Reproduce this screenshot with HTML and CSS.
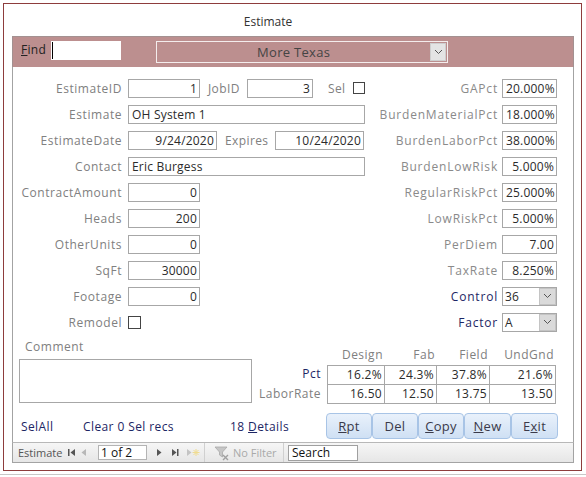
FILE: index.html
```html
<!DOCTYPE html>
<html>
<head>
<meta charset="utf-8">
<link rel="stylesheet" href="styles.css">
</head>
<body>
<div class="window">
  <div class="title">Estimate</div>
  <div class="form">
    <div class="header">
      <span class="find"><u>F</u>ind</span>
      <div class="find-input"><span class="caret"></span></div>
      <div class="combo">
        <span class="combo-text">More Texas</span>
        <span class="dd"><svg width="9" height="6" viewBox="0 0 9 6"><path d="M1 1 L4.5 4.5 L8 1" fill="none" stroke="#555" stroke-width="1"/></svg></span>
      </div>
    </div>
    <div class="detail">
      <div class="fields">
        <div class="col-left">
          <div class="row"><span class="lbl">EstimateID</span><span class="box num w72">1</span><span class="lbl2 job">JobID</span><span class="box num w66">3</span><span class="lbl2 sel">Sel</span><span class="chk"></span></div>
          <div class="row"><span class="lbl">Estimate</span><span class="box w237">OH System 1</span></div>
          <div class="row"><span class="lbl">EstimateDate</span><span class="box num w89">9/24/2020</span><span class="lbl2 exp">Expires</span><span class="box num w89">10/24/2020</span></div>
          <div class="row"><span class="lbl">Contact</span><span class="box w237">Eric Burgess</span></div>
          <div class="row"><span class="lbl">ContractAmount</span><span class="box num w72">0</span></div>
          <div class="row"><span class="lbl">Heads</span><span class="box num w72">200</span></div>
          <div class="row"><span class="lbl">OtherUnits</span><span class="box num w72">0</span></div>
          <div class="row"><span class="lbl">SqFt</span><span class="box num w72">30000</span></div>
          <div class="row"><span class="lbl">Footage</span><span class="box num w72">0</span></div>
          <div class="row"><span class="lbl">Remodel</span><span class="chk big"></span></div>
        </div>
        <div class="col-right">
          <div class="row"><span class="rlbl">GAPct</span><span class="box num w55">20.000%</span></div>
          <div class="row"><span class="rlbl">BurdenMaterialPct</span><span class="box num w55">18.000%</span></div>
          <div class="row"><span class="rlbl">BurdenLaborPct</span><span class="box num w55">38.000%</span></div>
          <div class="row"><span class="rlbl">BurdenLowRisk</span><span class="box num w55">5.000%</span></div>
          <div class="row"><span class="rlbl">RegularRiskPct</span><span class="box num w55">25.000%</span></div>
          <div class="row"><span class="rlbl">LowRiskPct</span><span class="box num w55">5.000%</span></div>
          <div class="row"><span class="rlbl">PerDiem</span><span class="box num w55">7.00</span></div>
          <div class="row"><span class="rlbl">TaxRate</span><span class="box num w55">8.250%</span></div>
          <div class="row"><span class="rlbl navy">Control</span><span class="box w55 cbo"><span class="cbo-val">36</span><span class="dd small"><svg width="9" height="6" viewBox="0 0 9 6"><path d="M1 1 L4.5 4.5 L8 1" fill="none" stroke="#555" stroke-width="1"/></svg></span></span></div>
          <div class="row"><span class="rlbl navy">Factor</span><span class="box w55 cbo"><span class="cbo-val">A</span><span class="dd small"><svg width="9" height="6" viewBox="0 0 9 6"><path d="M1 1 L4.5 4.5 L8 1" fill="none" stroke="#555" stroke-width="1"/></svg></span></span></div>
        </div>
      </div>
      <div class="lower">
        <div class="comment-col">
          <div class="comment-lbl">Comment</div>
          <div class="comment-box"></div>
        </div>
        <div class="grid">
          <div class="grow ghead"><span class="glbl"></span><span class="gc c1">Design</span><span class="gc c2">Fab</span><span class="gc c3">Field</span><span class="gc c4">UndGnd</span></div>
          <div class="grow gdata first-row"><span class="glbl navy">Pct</span><span class="gc c1">16.2%</span><span class="gc c2">24.3%</span><span class="gc c3">37.8%</span><span class="gc c4">21.6%</span></div>
          <div class="grow gdata"><span class="glbl">LaborRate</span><span class="gc c1">16.50</span><span class="gc c2">12.50</span><span class="gc c3">13.75</span><span class="gc c4">13.50</span></div>
        </div>
      </div>
      <div class="actions">
        <span class="link a1">SelAll</span>
        <span class="link a2">Clear 0 Sel recs</span>
        <span class="link a3">18 <u>D</u>etails</span>
        <div class="btns">
          <span class="btn b46"><u>R</u>pt</span>
          <span class="btn b46">Del</span>
          <span class="btn b46"><u>C</u>opy</span>
          <span class="btn b47"><u>N</u>ew</span>
          <span class="btn b47">E<u>x</u>it</span>
        </div>
      </div>
    </div>
    <div class="nav">
      <span class="nav-name">Estimate</span>
      <svg class="ic first" width="8" height="9" viewBox="0 0 8 9"><rect x="0" y="1" width="1.5" height="7" fill="#555"/><path d="M7 1 L2.5 4.5 L7 8 Z" fill="#555"/></svg>
      <svg class="ic prev" width="6" height="9" viewBox="0 0 6 9"><path d="M5 1 L0.5 4.5 L5 8 Z" fill="#b8b8b8"/></svg>
      <span class="nav-box">1 of 2</span>
      <svg class="ic next" width="6" height="9" viewBox="0 0 6 9"><path d="M1 1 L5.5 4.5 L1 8 Z" fill="#555"/></svg>
      <svg class="ic last" width="8" height="9" viewBox="0 0 8 9"><path d="M1 1 L5.5 4.5 L1 8 Z" fill="#555"/><rect x="6" y="1" width="1.5" height="7" fill="#555"/></svg>
      <svg class="ic newrec" width="14" height="9" viewBox="0 0 14 9"><path d="M1 1 L5.5 4.5 L1 8 Z" fill="#c4c4c4"/><path d="M10 1 V8 M6.5 4.5 H13.5 M7.5 2 L12.5 7 M12.5 2 L7.5 7" stroke="#f0dc90" stroke-width="1"/></svg>
      <span class="sep s1"></span>
      <svg class="ic filter" width="18" height="16" viewBox="0 0 18 16"><path d="M2 2 H14 L9.5 7 V12 L6.5 10 V7 Z" fill="#c6c6c6" stroke="#a8a8a8" stroke-width="0.8"/><path d="M10 10 L15 15 M15 10 L10 15" stroke="#a0a0a0" stroke-width="1.4"/></svg>
      <span class="nofilter">No Filter</span>
      <span class="sep s2"></span>
      <span class="search">Search</span>
    </div>
  </div>
</div>
<div class="baseline"></div>
</body>
</html>
```

FILE: styles.css
```css
* { box-sizing: border-box; }
body {
  margin: 0;
  font-family: "Open Sans", "Noto Sans", sans-serif;
  font-size: 12px;
  background: #fff;
  color: #222;
}
.window {
  margin: 3px 0 0 3px;
  width: 579px;
  height: 468px;
  border: 1px solid #8e3d3d;
}
.title {
  height: 32px;
  padding-top: 3px;
  line-height: 30px;
  text-align: center;
  padding-right: 49px;
  color: #333;
}
.form {
  margin-left: 8px;
  width: 562px;
}
.header {
  height: 31px;
  background: #bc8f8f;
  border: 1px solid #a39191;
  border-bottom: none;
  display: flex;
  align-items: flex-start;
}
.find {
  margin: 5px 0 0 8px;
  line-height: 16px;
  color: #222;
  letter-spacing: 0.3px;
}
.find-input {
  margin: 4px 0 0 5px;
  width: 70px;
  height: 19px;
  background: #fff;
  position: relative;
}
.caret {
  position: absolute;
  left: 1px;
  top: 1px;
  width: 1px;
  height: 17px;
  background: #000;
}
.combo {
  margin: 4px 0 0 35px;
  width: 292px;
  height: 22px;
  border: 1px solid #f4eded;
  display: flex;
  align-items: center;
}
.combo-text {
  flex: 1;
  text-align: center;
  color: #444;
  font-size: 13px;
  letter-spacing: 0.3px;
}
.dd {
  width: 16px;
  height: 18px;
  margin-right: 1px;
  background: #e4e4e4;
  border: 1px solid #cfcfcf;
  display: flex;
  align-items: center;
  justify-content: center;
}
.detail {
  height: 375px;
  border-left: 1px solid #a3a3a3;
  border-right: 1px solid #a3a3a3;
  background: #fff;
}
.fields {
  display: flex;
  padding-top: 8px;
}
.col-left { width: 357px; }
.col-right { width: 203px; }
.row {
  display: flex;
  align-items: center;
  height: 26px;
}
.lbl {
  width: 109px;
  margin-right: 6px;
  text-align: right;
  color: #808080;
  letter-spacing: 0.55px;
}
.lbl2 {
  color: #808080;
  letter-spacing: 0.4px;
}
.job { margin-left: 8px; width: 39px; }
.sel { margin-left: 15px; width: 25px; }
.exp { margin-left: 8px; width: 50px; }
.rlbl {
  width: 128px;
  margin-right: 4px;
  text-align: right;
  color: #8a8a8a;
  letter-spacing: 0.8px;
}
.navy { color: #1d2664; }
.box {
  height: 19px;
  border: 1px solid #a7a7a7;
  padding: 0 3px;
  line-height: 17px;
  color: #2b2b2b;
  background: #fff;
  white-space: nowrap;
  letter-spacing: 0.2px;
}
.num { text-align: right; padding-right: 2px; }
.w72 { width: 72px; }
.w66 { width: 66px; }
.w89 { width: 89px; }
.w237 { width: 237px; }
.w55 { width: 55px; }
.chk {
  width: 12px;
  height: 12px;
  border: 1px solid #444;
  background: #fff;
}
.chk.big { width: 13px; height: 13px; }
.cbo {
  display: flex;
  align-items: center;
  padding: 0 0 0 2px;
}
.cbo-val { flex: 1; }
.dd.small {
  width: 17px;
  height: 17px;
  margin-right: 0;
  background: #dadada;
  border: 1px solid #c4c4c4;
}
.lower {
  display: flex;
  align-items: flex-start;
  margin-top: 4px;
}
.comment-col {
  margin-left: 6px;
  width: 233px;
}
.comment-lbl {
  padding-left: 6px;
  height: 16px;
  line-height: 16px;
  color: #808080;
  letter-spacing: 0.5px;
}
.comment-box {
  margin-top: 4px;
  width: 233px;
  height: 44px;
  border: 1px solid #a7a7a7;
}
.grid {
  margin-top: 8px;
  margin-left: 1px;
}
.grow {
  display: flex;
}
.glbl {
  width: 74px;
  padding-right: 6px;
  text-align: right;
  color: #808080;
  letter-spacing: 0.5px;
}
.glbl.navy { color: #1d2664; }
.gc {
  text-align: right;
  padding-right: 2px;
  letter-spacing: 0.3px;
  white-space: nowrap;
}
.ghead { height: 18px; line-height: 16px; }
.ghead .gc { color: #808080; letter-spacing: 0.5px; }
.gdata { height: 19px; line-height: 18px; }
.gdata .gc {
  color: #2b2b2b;
  border-right: 1px solid #a7a7a7;
  border-bottom: 1px solid #a7a7a7;
}
.gdata .c1 { border-left: 1px solid #a7a7a7; }
.first-row .gc { border-top: 1px solid #a7a7a7; }
.first-row { height: 20px; }
.c1 { width: 58px; }
.c2 { width: 52px; }
.c3 { width: 53px; }
.c4 { width: 66px; }
.actions {
  display: flex;
  align-items: center;
  height: 26px;
  margin-top: 9px;
}
.link {
  color: #1d2664;
  letter-spacing: 0.4px;
}
.a1 { margin-left: 8px; width: 62px; }
.a2 { width: 147px; }
.a3 { width: 96px; }
.btns { display: flex; }
.btn {
  height: 26px;
  line-height: 24px;
  text-align: center;
  border: 1px solid #a8c4e6;
  border-radius: 4px;
  background: linear-gradient(#e9f1fb, #cfe0f4);
  color: #3a3a4a;
  font-size: 13px;
  letter-spacing: 0.3px;
}
.b46 { width: 46px; }
.b47 { width: 47px; }
.nav {
  height: 21px;
  border: 1px solid #a3a3a3;
  border-top-color: #b8b8b8;
  background: linear-gradient(#f6f6f6, #e6e6e6);
  display: flex;
  align-items: center;
  color: #555;
  font-size: 11px;
}
.nav-name { margin-left: 5px; width: 50px; }
.ic { display: block; }
.prev { margin-left: 5px; }
.nav-box {
  margin-left: 11px;
  width: 49px;
  height: 15px;
  line-height: 13px;
  border: 1px solid #b4b4b4;
  background: #fff;
  color: #111;
  padding-left: 2px;
  font-size: 12px;
}
.next { margin-left: 9px; }
.last { margin-left: 9px; }
.newrec { margin-left: 7px; }
.sep {
  width: 1px;
  height: 19px;
  background: #d0d0d0;
}
.s1 { margin-left: 4px; }
.filter { margin-left: 8px; }
.nofilter { margin-left: 2px; color: #a9a9a9; width: 50px; }
.search {
  margin-left: 4px;
  width: 70px;
  height: 16px;
  line-height: 14px;
  border: 1px solid #a0a0a0;
  background: #fff;
  color: #111;
  padding-left: 3px;
  font-size: 12px;
}
.baseline {
  margin-top: 3px;
  height: 1px;
  background: #c8c8c8;
}
```
